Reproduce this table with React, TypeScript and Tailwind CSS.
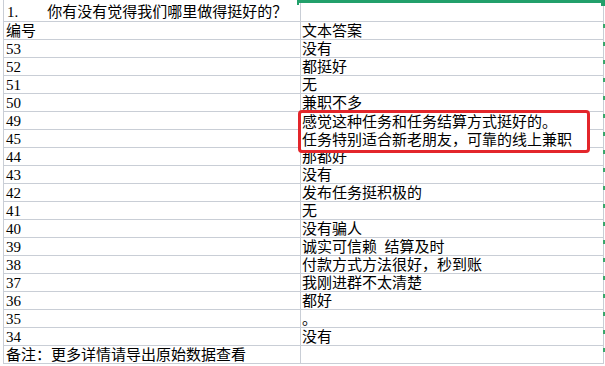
import React from 'react';

const rows: [string, string][] = [
  ['编号', '文本答案'],
  ['53', '没有'],
  ['52', '都挺好'],
  ['51', '无'],
  ['50', '兼职不多'],
  ['49', ''],
  ['45', ''],
  ['44', '那都好'],
  ['43', '没有'],
  ['42', '发布任务挺积极的'],
  ['41', '无'],
  ['40', '没有骗人'],
  ['39', '诚实可信赖  结算及时'],
  ['38', '付款方式方法很好，秒到账'],
  ['37', '我刚进群不太清楚'],
  ['36', '都好'],
  ['35', '。'],
  ['34', '没有'],
  ['备注：更多详情请导出原始数据查看', ''],
];

const Row: React.FC<{ a: string; b: string }> = ({ a, b }) => (
  <div className="relative flex h-[18px] border-b border-[#c9ced6]">
    <div className="w-[297px] shrink-0 border-r border-[#c9ced6] pl-[2px] pt-[2px] leading-[15px] whitespace-pre overflow-visible">
      {a}
    </div>
    <div className="w-[303px] shrink-0 border-r border-[#c9ced6] pl-[1px] pt-[2px] leading-[15px] whitespace-pre">
      {b}
    </div>
    <span className="absolute left-[599px] top-[2px] w-[2px] h-[4px] bg-[#3aa76d]" />
  </div>
);

export default function App() {
  return (
    <div
      className="relative w-[605px] h-[366px] overflow-hidden bg-white text-[15px] text-black"
      style={{ fontFamily: '"Liberation Serif", "Noto Sans CJK SC", serif' }}
    >
      <div className="ml-[3px] w-[601px] border-l border-[#c9ced6]">
        {/* title row */}
        <div className="flex h-[22px] border-b border-[#c9ced6]">
          <div className="w-[297px] shrink-0 border-r border-[#c9ced6] pl-[3px] pt-[5px] leading-[15px] whitespace-nowrap">
            1.<span className="ml-[29px]">你有没有觉得我们哪里做得挺好的？</span>
          </div>
          <div className="w-[303px] shrink-0 border-r border-[#c9ced6]" />
        </div>
        {rows.map(([a, b], i) => (
          <Row key={i} a={a} b={b} />
        ))}
      </div>

      {/* selection border */}
      <div className="absolute left-[297px] top-0 w-[308px] h-[3px] bg-[#22a06b]" />
      <div className="absolute left-[297px] top-0 w-[2px] h-[5px] bg-[#22a06b]" />
      <div className="absolute left-[601px] top-0 w-[4px] h-[6px] bg-[#22a06b]" />

      {/* red annotation box */}
      <div className="absolute left-[298px] top-[110px] w-[292px] h-[43px] rounded-[4px] border-[3px] border-[#e3262b] bg-white pl-[1px] leading-[18px] whitespace-nowrap">
        <div>感觉这种任务和任务结算方式挺好的。</div>
        <div>任务特别适合新老朋友，可靠的线上兼职</div>
      </div>
    </div>
  );
}
